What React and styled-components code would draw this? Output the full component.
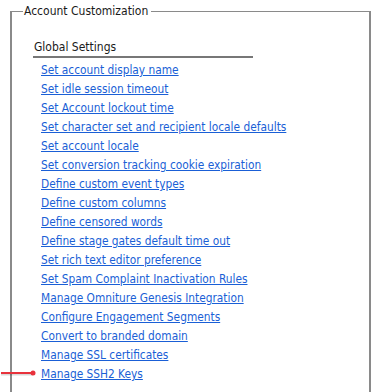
import React from "react";
import styled, { createGlobalStyle } from "styled-components";

const Global = createGlobalStyle`
  html, body { margin: 0; padding: 0; background: #fff; }
  body { font-family: "DejaVu Sans Condensed", "DejaVu Sans", Tahoma, sans-serif; }
`;

const Page = styled.div`
  position: relative;
  width: 377px;
  height: 392px;
  overflow: hidden;
  background: #fff;
`;

const Fieldset = styled.fieldset`
  margin: 4px 0 0 10px;
  width: 361px;
  height: 420px;
  box-sizing: border-box;
  border-color: #8a8a8a;
  border-width: 1px 2px 2px 2px;
  border-style: solid;
  padding: 0;
`;

const Legend = styled.legend`
  font-size: 12px;
  color: #1a1a1a;
  padding: 0 3px 0 1px;
  margin-left: 11px;
  line-height: 14px;
`;

const Section = styled.div`
  margin: 21px 0 0 21px;
  width: 220px;
`;

const SectionTitle = styled.div`
  font-size: 12px;
  color: #1a1a1a;
  padding: 0 0 1px 1px;
  border-bottom: 2px solid #777;
  line-height: 16px;
`;

const LinkList = styled.ul`
  list-style: none;
  margin: 1px 0 0 0;
  padding: 0 0 0 8px;
  display: flex;
  flex-direction: column;
`;

const Item = styled.li`
  height: 19px;
  line-height: 19px;
  white-space: nowrap;
`;

const Link = styled.a`
  font-size: 11.8px;
  color: #1a5fd6;
  text-decoration: underline;
  cursor: pointer;
`;

const Arrow = styled.svg`
  position: absolute;
  left: 0;
  top: 366px;
`;

const links = [
  "Set account display name",
  "Set idle session timeout",
  "Set Account lockout time",
  "Set character set and recipient locale defaults",
  "Set account locale",
  "Set conversion tracking cookie expiration",
  "Define custom event types",
  "Define custom columns",
  "Define censored words",
  "Define stage gates default time out",
  "Set rich text editor preference",
  "Set Spam Complaint Inactivation Rules",
  "Manage Omniture Genesis Integration",
  "Configure Engagement Segments",
  "Convert to branded domain",
  "Manage SSL certificates",
  "Manage SSH2 Keys",
];

export default function App() {
  return (
    <Page>
      <Global />
      <Fieldset>
        <Legend>Account Customization</Legend>
        <Section>
          <SectionTitle>Global Settings</SectionTitle>
          <LinkList>
            {links.map((l) => (
              <Item key={l}>
                <Link>{l}</Link>
              </Item>
            ))}
          </LinkList>
        </Section>
      </Fieldset>
      <Arrow width="40" height="14" viewBox="0 0 40 14">
        <line x1="1" y1="8" x2="33" y2="8" stroke="rgba(0,0,0,0.15)" strokeWidth="3" />
        <line x1="1" y1="7" x2="33" y2="7" stroke="#e8323c" strokeWidth="2" />
        <circle cx="33" cy="7" r="2.5" fill="#e8323c" />
      </Arrow>
    </Page>
  );
}
